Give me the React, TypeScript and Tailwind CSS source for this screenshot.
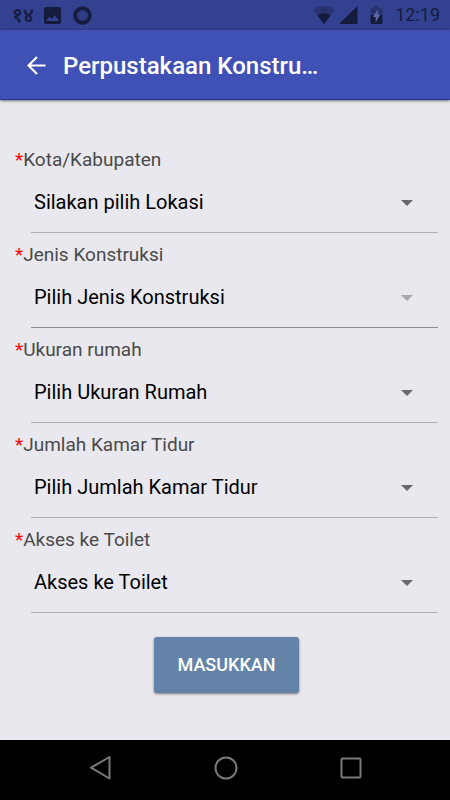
import clsx from 'clsx'
import React from 'react'

interface Field {
  id: string
  label: string
  placeholder: string
  disabled?: boolean
}

const fields: Field[] = [
  { id: 'location', label: 'Kota/Kabupaten', placeholder: 'Silakan pilih Lokasi' },
  { id: 'construction', label: 'Jenis Konstruksi', placeholder: 'Pilih Jenis Konstruksi', disabled: true },
  { id: 'size', label: 'Ukuran rumah', placeholder: 'Pilih Ukuran Rumah' },
  { id: 'bedrooms', label: 'Jumlah Kamar Tidur', placeholder: 'Pilih Jumlah Kamar Tidur' },
  { id: 'toilet', label: 'Akses ke Toilet', placeholder: 'Akses ke Toilet' }
]

const StatusBar: React.FC = () => (
  <div className="flex h-[30px] items-center justify-between bg-[#334191] pr-2.5 pl-3 text-[#151b3d]">
    <div className="flex items-center">
      <span className="w-8 font-['Noto_Sans',sans-serif] text-xl leading-6 font-semibold">१४</span>
      <svg width="17" height="17" viewBox="0 0 17 17" className="mr-3">
        <path
          fill="currentColor"
          fillRule="evenodd"
          d="M2 0h13a2 2 0 0 1 2 2v13a2 2 0 0 1-2 2H2a2 2 0 0 1-2-2V2a2 2 0 0 1 2-2zM2 14h13l-4-6-3 4-2.500-2.500z"
        />
      </svg>
      <svg width="19" height="19" viewBox="0 0 19 19">
        <circle cx="9.500" cy="9.500" r="7.500" fill="#2a3678" stroke="currentColor" strokeWidth="3.400" />
        <circle cx="9.500" cy="9.500" r="4" fill="#303d88" />
      </svg>
    </div>
    <div className="flex items-center">
      <svg width="22" height="18" viewBox="0 0 22 18" className="mr-1">
        <path d="M0 4Q11-4 22 4L11 18z" fill="#28326f" />
        <path d="M4.500 9.500Q11 5 17.500 9.500L11 18z" fill="currentColor" />
      </svg>
      <svg width="19" height="18" viewBox="0 0 19 18" className="mr-3">
        <path d="M18.500 0v18H0z" fill="currentColor" />
      </svg>
      <svg width="13" height="18" viewBox="0 0 13 18" className="mr-3">
        <path d="M4 0h5v2h2.500q1 0 1 1v6H.5V3q0-1 1-1H4z" fill="#28326f" />
        <path d="M.5 9h12v8q0 1-1 1h-10q-1 0-1-1z" fill="currentColor" />
        <path d="M8 3.500L2.800 11H5.700v5.500L10.300 8.500H7.800z" fill="#5a66a6" />
      </svg>
      <span className="text-lg leading-6">12:19</span>
    </div>
  </div>
)

const AppBar: React.FC = () => (
  <header className="flex h-[70px] items-center border-b border-[#24359a] bg-[#3f51b5] pt-0.5 pl-[27px] text-white shadow-sm shadow-black/40">
    <button type="button" aria-label="Kembali" className="mr-[17px]">
      <svg width="19" height="19" viewBox="0 0 19 19" fill="none" stroke="currentColor" strokeWidth="2.200">
        <path d="M18.500 9.500H2M10 1L1.500 9.500 10 18" />
      </svg>
    </button>
    <h1 className="text-2xl leading-8 font-medium">Perpustakaan Konstru…</h1>
  </header>
)

const SelectField: React.FC<{ field: Field }> = ({ field }) => (
  <div>
    <label htmlFor={field.id} className="block text-[19px] leading-6 text-[#4a4a4a]">
      <span className="text-[#ff0000]">*</span>
      {field.label}
    </label>
    <div className="relative ml-4">
      <select
        id={field.id}
        disabled={field.disabled}
        className={clsx(
          'block h-[61px] w-full appearance-none border-b bg-transparent pl-[3px] text-xl text-black opacity-100',
          field.disabled ? 'border-[#8e8e90]' : 'border-[#b0b0b3]'
        )}
      >
        <option>{field.placeholder}</option>
      </select>
      <svg
        width="12"
        height="6"
        viewBox="0 0 12 6"
        className={clsx(
          'pointer-events-none absolute top-1/2 right-[25px] -translate-y-1/2',
          field.disabled ? 'text-[#aaaaae]' : 'text-[#69696c]'
        )}
      >
        <path d="M0 0h12L6 6z" fill="currentColor" />
      </svg>
    </div>
  </div>
)

const NavigationBar: React.FC = () => (
  <nav className="flex h-[60px] items-center justify-between bg-black px-[88px] pb-1 text-[#7a7a7a]">
    <button type="button" aria-label="Kembali">
      <svg width="24" height="26" viewBox="0 0 24 26" fill="none" stroke="currentColor" strokeWidth="2">
        <path d="M21.500 2v21.500L3 12.700z" strokeLinejoin="round" />
      </svg>
    </button>
    <button type="button" aria-label="Beranda">
      <svg width="24" height="24" viewBox="0 0 24 24" fill="none" stroke="currentColor" strokeWidth="2">
        <circle cx="12" cy="12" r="10.500" />
      </svg>
    </button>
    <button type="button" aria-label="Aplikasi terbaru">
      <svg width="22" height="22" viewBox="0 0 22 22" fill="none" stroke="currentColor" strokeWidth="2">
        <rect x="1.500" y="1.500" width="19" height="19" rx="1" />
      </svg>
    </button>
  </nav>
)

export default function App() {
  return (
    <div className="flex min-h-screen flex-col bg-[#e9e8ee] font-['Roboto',sans-serif]">
      <StatusBar />
      <AppBar />

      <form className="flex flex-1 flex-col gap-2.5 pt-12 pr-3 pb-10 pl-[15px]" onSubmit={e => e.preventDefault()}>
        {fields.map(field => (
          <SelectField key={field.id} field={field} />
        ))}
        <button
          type="submit"
          className="mt-3.5 h-14 self-center rounded-[3px] bg-[#6383a9] px-6 text-lg font-medium text-white shadow-sm shadow-black/40"
        >
          MASUKKAN
        </button>
      </form>

      <NavigationBar />
    </div>
  )
}
